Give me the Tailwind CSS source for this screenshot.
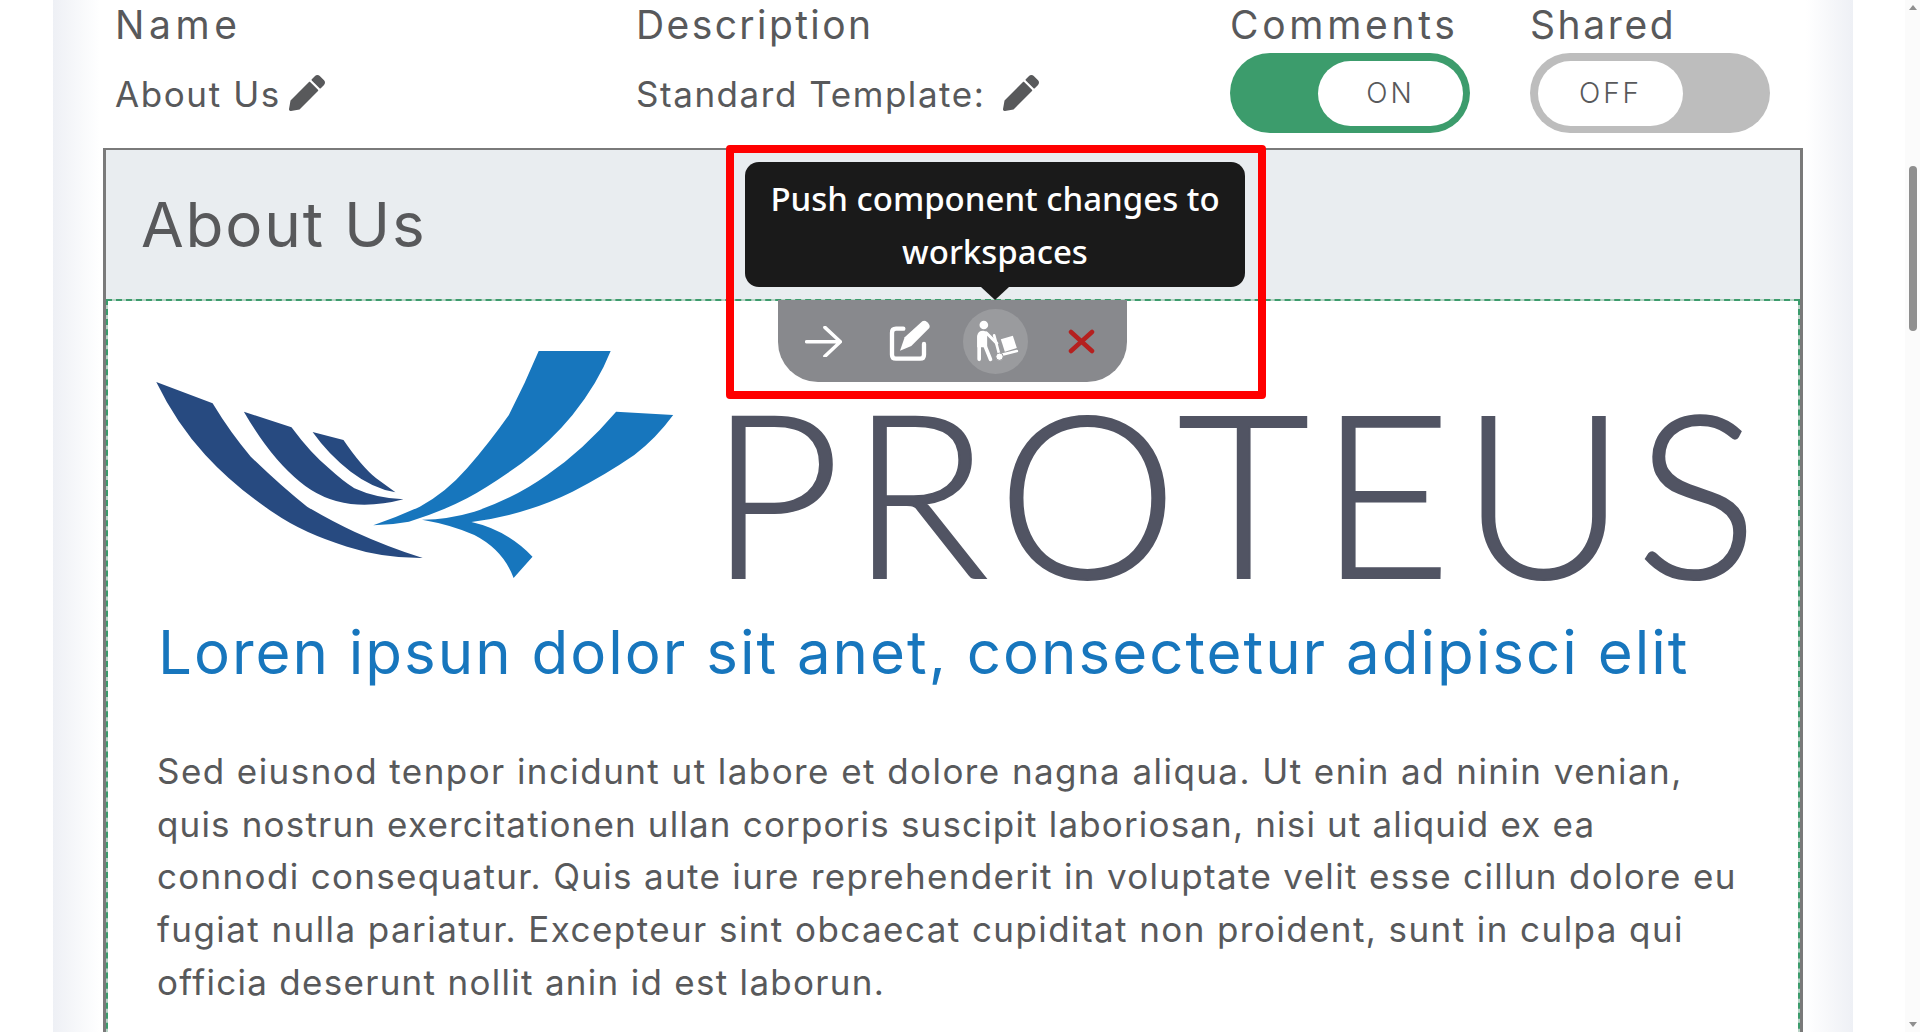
<!DOCTYPE html>
<html lang="en">
<head>
    <meta charset="UTF-8">
    <script src="https://cdn.jsdelivr.net/npm/@tailwindcss/browser@4"></script>
    <title>About Us</title>
</head>
<body class="h-[1032px] overflow-hidden flex bg-white font-['Inter',sans-serif] text-[#58595b]">

<main class="w-[1800px] ml-[53px] h-[1032px] overflow-hidden px-[50px] bg-[linear-gradient(90deg,#eef0f5_0,#fff_47px,#fff_1753px,#eef0f5_100%)]">

    <!-- name / description / toggles -->
    <div class="grid grid-cols-[521px_594px_300px_240px] pl-[12px] h-[148px]">
        <div>
            <div class="h-[53px] leading-[50px] text-[39px] tracking-[4.6px]">Name</div>
            <div class="flex items-center gap-[8px] h-[82px] text-[35px] tracking-[1.6px]">
                About Us
                <svg class="w-[36px] h-[36px] -mt-[2px]" viewBox="0 0 512 512" fill="#58595b"><path d="M497.9 142.1l-46.1 46.1c-4.7 4.7-12.3 4.7-17 0l-111-111c-4.7-4.7-4.7-12.3 0-17l46.1-46.1c18.7-18.7 49.1-18.7 67.9 0l60.1 60.1c18.8 18.7 18.8 49.1 0 67.9zM284.2 99.8L21.6 362.4.4 483.9c-2.9 16.4 11.4 30.6 27.8 27.8l121.5-21.3 262.6-262.6c4.7-4.7 4.7-12.3 0-17l-111-111c-4.8-4.7-12.4-4.7-17.1 0z"/></svg>
            </div>
        </div>
        <div>
            <div class="h-[53px] leading-[50px] text-[39px] tracking-[2.4px]">Description</div>
            <div class="flex items-center gap-[18px] h-[82px] text-[35px] tracking-[1.55px]">
                Standard Template:
                <svg class="w-[36px] h-[36px] -mt-[2px]" viewBox="0 0 512 512" fill="#58595b"><path d="M497.9 142.1l-46.1 46.1c-4.7 4.7-12.3 4.7-17 0l-111-111c-4.7-4.7-4.7-12.3 0-17l46.1-46.1c18.7-18.7 49.1-18.7 67.9 0l60.1 60.1c18.8 18.7 18.8 49.1 0 67.9zM284.2 99.8L21.6 362.4.4 483.9c-2.9 16.4 11.4 30.6 27.8 27.8l121.5-21.3 262.6-262.6c4.7-4.7 4.7-12.3 0-17l-111-111c-4.8-4.7-12.4-4.7-17.1 0z"/></svg>
            </div>
        </div>
        <div>
            <div class="h-[53px] leading-[50px] text-[39px] tracking-[3.7px]">Comments</div>
            <div class="w-[240px] h-[80px] rounded-[40px] bg-[#3c9c6c] flex justify-end items-center pr-[7px]">
                <div class="w-[145px] h-[65px] rounded-[33px] bg-white flex items-center justify-center text-[28px] tracking-[3px] font-light">ON</div>
            </div>
        </div>
        <div>
            <div class="h-[53px] leading-[50px] text-[39px] tracking-[2.6px]">Shared</div>
            <div class="w-[240px] h-[80px] rounded-[40px] bg-[#bdbdbd] flex items-center pl-[8px]">
                <div class="w-[145px] h-[65px] rounded-[33px] bg-white flex items-center justify-center text-[28px] tracking-[3px] font-light">OFF</div>
            </div>
        </div>
    </div>

    <!-- component panel -->
    <div class="relative border-x-[3px] border-t-[2px] border-[#7a7a7a] h-[900px]">
        <div class="h-[149px] bg-[#e9edf0] pl-[35px] pt-[33px] text-[62px] leading-[84px] tracking-[1.8px]">About Us</div>

        <div class="h-[760px] border-2 border-dashed border-[#3c9c6c] bg-[#b9d3c6]">
            <div class="h-full bg-white">
                <div class="flex items-start pl-[21px] pt-[29px] h-[307px]">
                    <svg class="w-[570px] h-[270px] shrink-0" viewBox="0 0 1568 810" preserveAspectRatio="none">
                        <g fill="#274a80">
                            <path d="M75 156 L230 220 Q280 310 335 380 Q420 470 490 530 Q560 575 620 605 Q710 650 808 684 Q700 685 600 650 Q480 610 400 550 Q290 470 210 375 Q130 280 75 156Z"/>
                            <path d="M316 245 L447 292 Q500 370 550 415 Q590 455 620 475 Q680 505 755 508 Q680 530 610 522 Q530 510 470 455 Q390 385 316 245Z"/>
                            <path d="M505 306 L590 330 Q640 410 680 445 L733 487 Q670 475 610 425 Q550 375 505 306Z"/>
                        </g>
                        <g fill="#1776bd">
                            <path d="M1127 63 H1325 Q1290 160 1220 255 Q1160 335 1080 400 Q990 470 930 505 Q860 545 770 575 Q720 585 672 586 Q740 560 800 530 Q870 490 930 415 Q990 340 1045 255 Q1090 160 1127 63Z"/>
                            <path d="M1340 245 L1497 255 Q1450 325 1390 375 Q1310 435 1220 485 Q1090 555 942 576 Q1040 600 1110 680 L1058 744 Q1030 660 950 615 Q890 585 806 569 Q880 568 950 545 Q1060 505 1150 435 Q1250 360 1340 245Z"/>
                        </g>
                    </svg>
                    <div class="ml-[10px] mt-[46px] font-['Lato',sans-serif] font-light text-[228px] leading-[228px] tracking-[9.4px] text-[#515463] [-webkit-text-stroke:2px_#515463] whitespace-nowrap">PROTEUS</div>
                </div>
                <div class="pl-[50px] mt-[4px] text-[60px] leading-[80px] tracking-[2px] text-[#1776bd] whitespace-nowrap">Loren ipsun dolor sit anet, consectetur adipisci elit</div>
                <div class="pl-[49px] mt-[53px] text-[35px] leading-[52.7px] whitespace-nowrap">
                    <p class="tracking-[1.43px]">Sed eiusnod tenpor incidunt ut labore et dolore nagna aliqua. Ut enin ad ninin venian,</p>
                    <p class="tracking-[1.17px]">quis nostrun exercitationen ullan corporis suscipit laboriosan, nisi ut aliquid ex ea</p>
                    <p class="tracking-[1.32px]">connodi consequatur. Quis aute iure reprehenderit in voluptate velit esse cillun dolore eu</p>
                    <p class="tracking-[1.42px]">fugiat nulla pariatur. Excepteur sint obcaecat cupiditat non proident, sunt in culpa qui</p>
                    <p class="tracking-[1.29px]">officia deserunt nollit anin id est laborun.</p>
                </div>
            </div>
        </div>

        <!-- hover toolbar -->
        <div class="absolute left-[672px] top-[150px] w-[349px] h-[82px] rounded-b-[40px] bg-[#88898d] flex items-center gap-[21px] pl-[13px]">
            <button class="w-[65px] h-[65px] rounded-full flex items-center justify-center">
                <svg class="w-[37px] h-[31px]" viewBox="108 106 106 90" fill="none" stroke="#fff" stroke-width="10" stroke-linecap="round" stroke-linejoin="round"><path d="M112 152H208M165 110L210 152L165 194"/></svg>
            </button>
            <button class="w-[65px] h-[65px] rounded-full flex items-center justify-center">
                <svg class="w-[42px] h-[42px]" viewBox="355 90 126 126">
                    <path d="M398 116H376Q364 116 364 128V194Q364 206 376 206H448Q460 206 460 194V162" fill="none" stroke="#fff" stroke-width="13" stroke-linecap="round"/>
                    <path d="M388 182L402 142L455 94Q462 90 470 97Q480 106 476 114L422 168Z" fill="#fff"/>
                </svg>
            </button>
            <button class="w-[65px] h-[65px] rounded-full bg-[#9a9b9e] flex items-center justify-center">
                <svg class="w-[47px] h-[42px]" viewBox="600 90 140 126">
                    <circle cx="635" cy="105" r="13" fill="#fff"/>
                    <path d="M615 138Q617 122 633 122L645 125V172H615Z" fill="#fff"/>
                    <path d="M621 140V208M638 155V166L655 208" fill="none" stroke="#fff" stroke-width="11" stroke-linecap="round" stroke-linejoin="round"/>
                    <path d="M643 129L674 160" fill="none" stroke="#fff" stroke-width="9" stroke-linecap="round"/>
                    <path d="M666 136L682 196L734 183" fill="none" stroke="#fff" stroke-width="8" stroke-linecap="round"/>
                    <circle cx="682" cy="200" r="11" fill="#fff" stroke="#9a9b9e" stroke-width="3"/>
                    <path d="M686 148L722 137L734 174L698 185Z" fill="#fff"/>
                </svg>
            </button>
            <button class="w-[65px] h-[65px] rounded-full flex items-center justify-center">
                <svg class="w-[27px] h-[25px]" viewBox="0 0 27 25" fill="none" stroke="#b5201f" stroke-width="4.5" stroke-linecap="round"><path d="M3 3L24 22M24 3L3 22"/></svg>
            </button>
        </div>

        <!-- tooltip -->
        <div class="absolute left-[639px] top-[12px] w-[500px] h-[125px] rounded-[14px] bg-[#1a1a1a] text-white text-center font-['Noto_Sans',sans-serif] font-medium text-[33px] leading-[53px] pt-[10px]">
            Push component changes to<br>workspaces
            <div class="absolute left-[236px] top-[125px] w-0 h-0 border-x-[14px] border-x-transparent border-t-[13px] border-t-[#1a1a1a]"></div>
        </div>

        <!-- red highlight box -->
        <div class="absolute left-[620px] -top-[5px] w-[540px] h-[254px] border-[8px] border-[#ff0000] rounded-[4px]"></div>
    </div>
</main>

<!-- scrollbar -->
<div class="ml-auto w-[15px] h-[1032px] bg-[#fbfbfb] flex flex-col items-center pt-[5px] pb-[5px]">
    <div class="w-0 h-0 border-x-[4px] border-x-transparent border-b-[5px] border-b-[#8f8f8f]"></div>
    <div class="w-[8px] h-[165px] mt-[156px] rounded-[4px] bg-[#8f8f8f]"></div>
    <div class="mt-auto w-0 h-0 border-x-[4px] border-x-transparent border-t-[5px] border-t-[#8f8f8f]"></div>
</div>

</body>
</html>
